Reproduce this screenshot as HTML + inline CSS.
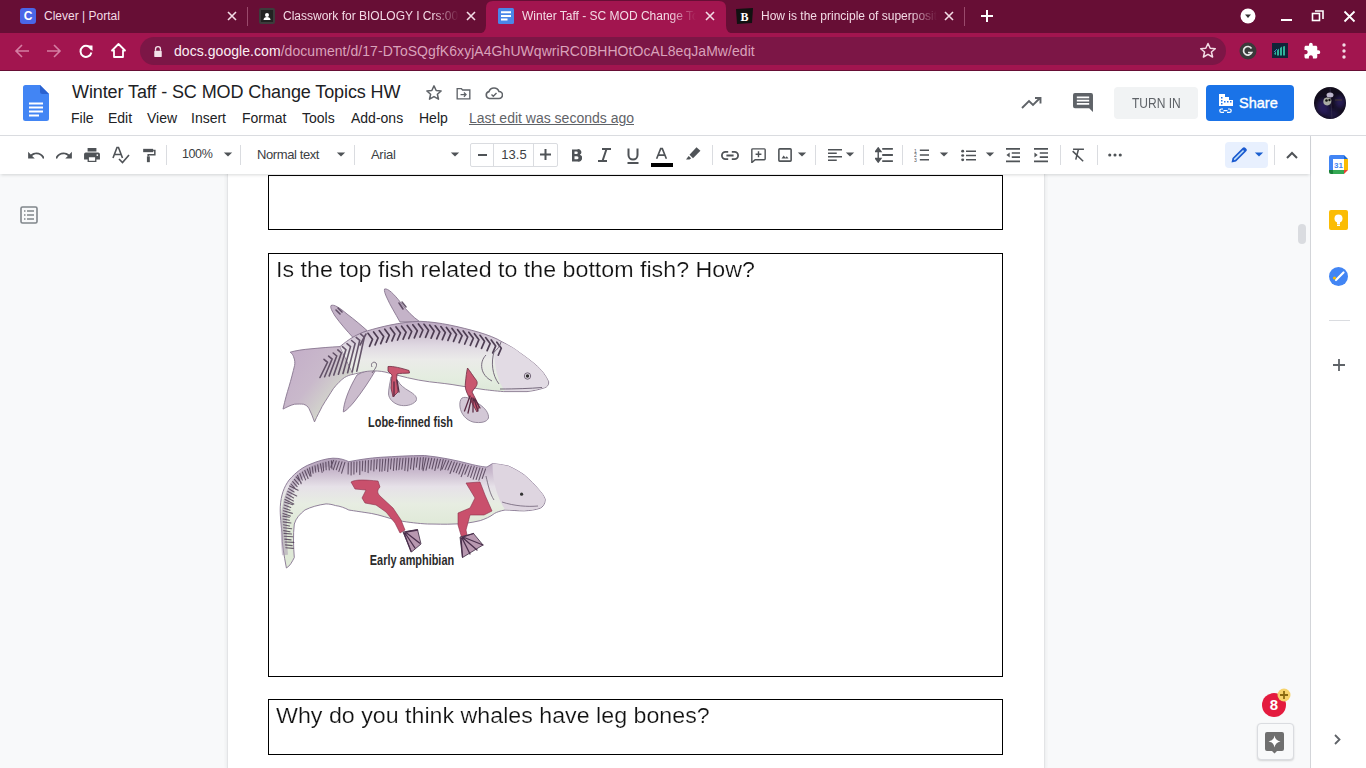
<!DOCTYPE html>
<html><head><meta charset="utf-8">
<style>
*{margin:0;padding:0;box-sizing:border-box}
html,body{width:1366px;height:768px;overflow:hidden;background:#f8f9fa;font-family:"Liberation Sans",sans-serif}
.a{position:absolute}
#tabbar{left:0;top:0;width:1366px;height:33px;background:#670e35}
#toolbar{left:0;top:33px;width:1366px;height:37px;background:#a2154f}
.tabt{font-size:12px;color:#f3dbe5;white-space:nowrap;top:9px;line-height:14px}
.sep{background:#9a4a6c}
#omni{left:140px;top:37px;width:1086px;height:28px;border-radius:14px;background:#7c1646}
#hdr{left:0;top:70px;width:1366px;height:65px;background:#fff;border-top:1px solid #670e35}
.menu{font-size:14px;color:#202124;top:110px;line-height:17px}
#dtb{left:0;top:135px;width:1310px;height:39px;background:#fff;border-top:1px solid #dadce0;box-shadow:0 2px 3px -1px rgba(60,64,67,.2)}
.tsep{width:1px;height:20px;top:145px;background:#dadce0}
.tt{font-size:13px;color:#3c4043;top:147px;line-height:16px}
#side{left:1310px;top:135px;width:56px;height:633px;background:#fff;border-left:1px solid #d3d5d9}
#page{left:227px;top:174px;width:818px;height:594px;background:#fff;border-left:1px solid #e3e4e6;border-right:1px solid #e3e4e6;box-shadow:0 0 3px 1px rgba(60,64,67,.07)}
.box{border:1.5px solid #000;left:268px;width:735px}
.q{font-size:21.5px;color:#111;-webkit-text-stroke:0.2px #fff;left:276px;line-height:24px;white-space:nowrap;transform-origin:0 0}
</style></head><body>
<!-- TAB BAR -->
<div id="tabbar" class="a"></div>
<!-- tab 1 -->
<div class="a" style="left:20px;top:8px;width:16px;height:16px;border-radius:3px;background:#4a66e8"></div>
<div class="a" style="left:20px;top:8px;width:16px;height:16px;color:#fff;font-weight:bold;font-size:12px;line-height:16px;text-align:center">C</div>
<div class="a tabt" style="left:44px">Clever | Portal</div>
<svg class="a" style="left:226px;top:10px" width="12" height="12" viewBox="0 0 12 12"><path d="M2 2L10 10M10 2L2 10" stroke="#f3dbe5" stroke-width="1.6"/></svg>
<div class="a sep" style="left:247px;top:7px;width:1px;height:19px"></div>
<!-- tab 2 -->
<div class="a" style="left:259px;top:8px;width:16px;height:16px;background:#3c3c3c;border-radius:2px"></div>
<svg class="a" style="left:259px;top:8px" width="16" height="16" viewBox="0 0 16 16"><rect x="2" y="2" width="12" height="12" fill="#222"/><circle cx="8" cy="7" r="2" fill="#fff"/><path d="M4.5 12c0-2 1.5-3 3.5-3s3.5 1 3.5 3z" fill="#fff"/></svg>
<div class="a tabt" style="left:283px;width:176px;overflow:hidden;-webkit-mask-image:linear-gradient(90deg,#000 85%,transparent)">Classwork for BIOLOGY I Crs:001</div>
<svg class="a" style="left:465px;top:10px" width="12" height="12" viewBox="0 0 12 12"><path d="M2 2L10 10M10 2L2 10" stroke="#f3dbe5" stroke-width="1.6"/></svg>
<!-- active tab -->
<svg class="a" style="left:0;top:0" width="1366" height="34" viewBox="0 0 1366 34"><path d="M478 33.5Q486 33.5 486 25.5V8Q486 1 493 1H719Q726 1 726 8V25.5Q726 33.5 734 33.5z" fill="#a2154f"/></svg>
<svg class="a" style="left:498px;top:8px" width="16" height="16" viewBox="0 0 16 16"><rect x="0" y="0" width="16" height="16" rx="1.5" fill="#4a86e8"/><path d="M3 4.3h10M3 7.9h10M3 11.5h6.5" stroke="#fff" stroke-width="2"/></svg>
<div class="a tabt" style="left:522px;width:174px;overflow:hidden;-webkit-mask-image:linear-gradient(90deg,#000 85%,transparent)">Winter Taff - SC MOD Change Topics HW</div>
<svg class="a" style="left:704px;top:10px" width="12" height="12" viewBox="0 0 12 12"><path d="M2 2L10 10M10 2L2 10" stroke="#f3dbe5" stroke-width="1.6"/></svg>
<!-- tab 4 -->
<svg class="a" style="left:736px;top:8px" width="17" height="16" viewBox="0 0 17 16"><path d="M0 1L17 0L16 15L1 16z" fill="#111"/><text x="8.5" y="12.5" font-family="Liberation Serif" font-weight="bold" font-size="12" fill="#fff" text-anchor="middle">B</text></svg>
<div class="a tabt" style="left:761px;width:176px;overflow:hidden;-webkit-mask-image:linear-gradient(90deg,#000 85%,transparent)">How is the principle of superposition</div>
<svg class="a" style="left:943px;top:10px" width="12" height="12" viewBox="0 0 12 12"><path d="M2 2L10 10M10 2L2 10" stroke="#f3dbe5" stroke-width="1.6"/></svg>
<div class="a sep" style="left:964px;top:7px;width:1px;height:19px"></div>
<svg class="a" style="left:980px;top:9px" width="14" height="14" viewBox="0 0 14 14"><path d="M7 1V13M1 7H13" stroke="#fff" stroke-width="2"/></svg>
<!-- window controls -->
<svg class="a" style="left:1240px;top:8px" width="16" height="16" viewBox="0 0 16 16"><circle cx="8" cy="8" r="7.5" fill="#fff"/><path d="M5 6.5h6L8 10z" fill="#333"/></svg>
<div class="a" style="left:1281px;top:19px;width:11px;height:2px;background:#fff"></div>
<svg class="a" style="left:1311px;top:10px" width="13" height="12" viewBox="0 0 13 12"><path d="M4 1h8v8" fill="none" stroke="#fff" stroke-width="1.6"/><rect x="1.5" y="3.5" width="7" height="7" fill="none" stroke="#fff" stroke-width="1.6"/></svg>
<svg class="a" style="left:1343px;top:10px" width="13" height="13" viewBox="0 0 13 13"><path d="M1.5 1.5L11.5 11.5M11.5 1.5L1.5 11.5" stroke="#fff" stroke-width="1.8"/></svg>

<!-- TOOLBAR -->
<div id="toolbar" class="a"></div>
<svg class="a" style="left:14px;top:43px" width="16" height="16" viewBox="0 0 16 16"><path d="M15 8H2M8 2L2 8L8 14" fill="none" stroke="#d57ea3" stroke-width="1.6"/></svg>
<svg class="a" style="left:46px;top:43px" width="16" height="16" viewBox="0 0 16 16"><path d="M1 8H14M8 2L14 8L8 14" fill="none" stroke="#d57ea3" stroke-width="1.6"/></svg>
<svg class="a" style="left:78px;top:43px" width="16" height="16" viewBox="0 0 16 16"><path d="M13.2 6.5A5.5 5.5 0 1 0 13.4 9.5" fill="none" stroke="#fff" stroke-width="2"/><path d="M9 2.5h5.5V8z" fill="#fff"/></svg>
<svg class="a" style="left:110px;top:42px" width="17" height="17" viewBox="0 0 17 17"><path d="M8.5 2L2 8.5H4V15H13V8.5H15z" fill="none" stroke="#fff" stroke-width="1.8" stroke-linejoin="round"/></svg>
<div id="omni" class="a"></div>
<svg class="a" style="left:153px;top:44.5px" width="10" height="12.5" viewBox="0 0 12 15"><path d="M3 7V5a3 3 0 0 1 6 0v2" fill="none" stroke="#f3e3ea" stroke-width="1.6"/><rect x="1.5" y="7" width="9" height="7.5" rx="1" fill="#f3e3ea"/></svg>
<div class="a" style="left:174px;top:43px;font-size:14px;letter-spacing:0.055px;line-height:16px;white-space:nowrap;color:#fbeff4">docs.google.com<span style="color:#d9a2ba">/document/d/17-DToSQgfK6xyjA4GhUWqwriRC0BHHOtOcAL8eqJaMw/edit</span></div>
<svg class="a" style="left:1199px;top:42px" width="18" height="17" viewBox="0 0 18 17"><path d="M9 1.5L11.2 6.3L16.3 6.7L12.4 10L13.6 15L9 12.3L4.4 15L5.6 10L1.7 6.7L6.8 6.3z" fill="none" stroke="#f3dbe5" stroke-width="1.5" stroke-linejoin="round"/></svg>
<svg class="a" style="left:1239px;top:42px" width="18" height="18" viewBox="0 0 18 18"><circle cx="9" cy="9" r="8.5" fill="#3a3a3a"/><path d="M12.5 6.5A4.3 4.3 0 1 0 12.8 10.5H9" fill="none" stroke="#e8e8e8" stroke-width="1.7"/></svg>
<svg class="a" style="left:1272px;top:43px" width="16" height="15" viewBox="0 0 16 15"><rect width="16" height="15" fill="#0f2438"/><path d="M2 11L4 8L4 12zM5 7.5L7 5.5V12.5H5zM8 5L10 3.5V12.5H8zM11 3.5L13 3V12.5H11z" fill="#2fb39a"/><path d="M2 9L5 6" stroke="#3a7fc4" stroke-width="1"/></svg>
<svg class="a" style="left:1303px;top:42px" width="18" height="18" viewBox="0 0 24 24"><path d="M20.5 11H19V7c0-1.1-.9-2-2-2h-4V3.5a2.5 2.5 0 0 0-5 0V5H4c-1.1 0-2 .9-2 2v3.8h1.5c1.5 0 2.7 1.2 2.7 2.7S5 16.2 3.5 16.2H2V20c0 1.1.9 2 2 2h3.8v-1.5c0-1.5 1.2-2.7 2.7-2.7s2.7 1.2 2.7 2.7V22H17c1.1 0 2-.9 2-2v-4h1.5a2.5 2.5 0 0 0 0-5z" fill="#fff"/></svg>
<svg class="a" style="left:1340px;top:42px" width="8" height="18" viewBox="0 0 8 18"><circle cx="4" cy="3" r="1.7" fill="#f3dbe5"/><circle cx="4" cy="9" r="1.7" fill="#f3dbe5"/><circle cx="4" cy="15" r="1.7" fill="#f3dbe5"/></svg>

<!-- DOCS HEADER -->
<div id="hdr" class="a"></div>
<svg class="a" style="left:23px;top:85px" width="26" height="36" viewBox="0 0 26 36"><path d="M0 2.5A2.5 2.5 0 0 1 2.5 0H17L26 9V33.5A2.5 2.5 0 0 1 23.5 36H2.5A2.5 2.5 0 0 1 0 33.5z" fill="#4285f4"/><path d="M17 0L26 9H19.5A2.5 2.5 0 0 1 17 6.5z" fill="#2a62d0"/><path d="M6 18.5H20M6 22.5H20M6 26.5H20M6 30.5H16" stroke="#fff" stroke-width="1.9"/></svg>
<div class="a" style="left:72px;top:81px;font-size:18px;letter-spacing:-0.1px;line-height:22px;color:#202124;white-space:nowrap">Winter Taff - SC MOD Change Topics HW</div>
<svg class="a" style="left:425px;top:84px" width="18" height="18" viewBox="0 0 24 24"><path d="M12 2.5l2.9 6.2 6.6.6-5 4.4 1.5 6.6L12 16.8l-6 3.5 1.5-6.6-5-4.4 6.6-.6z" fill="none" stroke="#5f6368" stroke-width="2" stroke-linejoin="round"/></svg>
<svg class="a" style="left:456px;top:86.5px" width="15" height="13.5" viewBox="0 0 17 16"><path d="M1 2h5l1.5 1.5H16V14H1z" fill="none" stroke="#5f6368" stroke-width="1.6"/><path d="M5 9H11M9 6.5L11.5 9L9 11.5" fill="none" stroke="#5f6368" stroke-width="1.5"/></svg>
<svg class="a" style="left:485px;top:86px" width="18" height="14" viewBox="0 0 18 14"><path d="M4.5 12.5A3.5 3.5 0 0 1 4 5.6A5.3 5.3 0 0 1 14 5.5A3.5 3.5 0 0 1 14 12.5z" fill="none" stroke="#5f6368" stroke-width="1.6"/><path d="M6.5 8.5L8.3 10.2L11.5 7" fill="none" stroke="#5f6368" stroke-width="1.4"/></svg>
<div class="a menu" style="left:71px">File</div>
<div class="a menu" style="left:108px">Edit</div>
<div class="a menu" style="left:147px">View</div>
<div class="a menu" style="left:191px">Insert</div>
<div class="a menu" style="left:242px">Format</div>
<div class="a menu" style="left:302px">Tools</div>
<div class="a menu" style="left:351px">Add-ons</div>
<div class="a menu" style="left:419px">Help</div>
<div class="a menu" style="left:469px;color:#5f6368;text-decoration:underline">Last edit was seconds ago</div>
<svg class="a" style="left:1021px;top:94px" width="22" height="16" viewBox="0 0 22 16"><path d="M1 14L8 7L12 11L19 4M14 4H19.5V9.5" fill="none" stroke="#5f6368" stroke-width="1.9"/></svg>
<svg class="a" style="left:1073px;top:93px" width="20" height="19" viewBox="0 0 21 20"><path d="M2 0H19A2 2 0 0 1 21 2V20L17 16H2A2 2 0 0 1 0 14V2A2 2 0 0 1 2 0z" fill="#5f6368"/><path d="M4 4.5H17M4 8H17M4 11.5H17" stroke="#fff" stroke-width="1.8"/></svg>
<div class="a" style="left:1114px;top:87px;width:84px;height:32px;border-radius:4px;background:#f1f3f4;color:#5f6368;font-size:14px;line-height:32px;text-align:center"><span style="display:inline-block;transform:scaleX(.86)">TURN IN</span></div>
<div class="a" style="left:1206px;top:85px;width:88px;height:36px;border-radius:4px;background:#1a73e8"></div>
<svg class="a" style="left:1218px;top:93px" width="16" height="20" viewBox="0 0 16 20"><path d="M1 1h6v3h4v3h4v6H1z" fill="#fff"/><g fill="#1a73e8"><rect x="3" y="4" width="1.5" height="1.5"/><rect x="3" y="7" width="1.5" height="1.5"/><rect x="3" y="10" width="1.5" height="1.5"/><rect x="9" y="8" width="1.5" height="1.5"/><rect x="12" y="8" width="1.5" height="1.5"/><rect x="6" y="8" width="1.5" height="1.5"/></g><path d="M5 16h-1.5a1.7 1.7 0 0 0 0 3.4H6M10 16h1.5a1.7 1.7 0 0 1 0 3.4H9M5.5 17.7h4" fill="none" stroke="#fff" stroke-width="1.2"/></svg>
<div class="a" style="left:1239px;top:94px;font-size:14.5px;line-height:18px;color:#fff;-webkit-text-stroke:0.35px #fff">Share</div>
<svg class="a" style="left:1314px;top:87px" width="32" height="32" viewBox="0 0 32 32"><defs><clipPath id="avc"><circle cx="16" cy="16" r="16"/></clipPath></defs><g clip-path="url(#avc)"><rect width="32" height="32" fill="#120d1c"/><defs><filter id="avb"><feGaussianBlur stdDeviation="2"/></filter></defs><g filter="url(#avb)"><ellipse cx="9" cy="20" rx="6" ry="8" fill="#3a2a8a" opacity=".55"/><ellipse cx="26" cy="15" rx="5" ry="6" fill="#3b2d90" opacity=".5"/><ellipse cx="18" cy="27" rx="7" ry="5" fill="#2a1f66" opacity=".5"/></g><path d="M16 0L18 32" stroke="#3a3550" stroke-width="1" opacity=".6"/><ellipse cx="16" cy="8" rx="3.5" ry="2.5" fill="#cfc8de" opacity=".9"/><path d="M10 12C11 10 15 10 17 12C18 14 17 17 15 18C13 19 10 18 9.5 16C9 14 9.5 13 10 12z" fill="#b9bcae" opacity=".9"/><circle cx="12.5" cy="13.5" r="1.3" fill="#111"/><circle cx="15.5" cy="13" r="1.2" fill="#111"/><path d="M21 13H28" stroke="#5a4a2a" stroke-width="1" opacity=".7"/></g></svg>


<div id="side" class="a"></div>
<!-- CONTENT -->
<div id="page" class="a"></div>
<svg class="a" style="left:20px;top:206px" width="18" height="18" viewBox="0 0 18 18"><rect x="1" y="1" width="16" height="16" rx="1.5" fill="none" stroke="#80868b" stroke-width="1.6"/><path d="M4 5H5.5M7 5H14M4 9H5.5M7 9H14M4 13H5.5M7 13H14" stroke="#80868b" stroke-width="1.4"/></svg>
<div class="a box" style="top:175px;height:55px"></div>
<div class="a box" style="top:253px;height:424px"></div>
<div class="a box" style="top:699px;height:56px"></div>
<div class="a q" style="top:258px;transform:scaleX(1.08)">Is the top fish related to the bottom fish? How?</div>
<div class="a q" style="top:704px;transform:scaleX(1.08)">Why do you think whales have leg bones?</div>

<!-- FISH ART -->
<svg class="a" style="left:0;top:0" width="1366" height="768" viewBox="0 0 1366 768">
<defs>
<linearGradient id="fb" x1="0" y1="320" x2="0" y2="392" gradientUnits="userSpaceOnUse"><stop offset="0" stop-color="#b9a5bf"/><stop offset=".17" stop-color="#cbbdcf"/><stop offset=".36" stop-color="#e0d9e2"/><stop offset=".55" stop-color="#ebebe9"/><stop offset=".8" stop-color="#e4ede0"/><stop offset="1" stop-color="#dde8d8"/></linearGradient>
<linearGradient id="ab" x1="0" y1="455" x2="0" y2="525" gradientUnits="userSpaceOnUse"><stop offset="0" stop-color="#b09db7"/><stop offset=".25" stop-color="#cbbccf"/><stop offset=".45" stop-color="#e6e1e8"/><stop offset=".7" stop-color="#e7ede2"/><stop offset="1" stop-color="#dfe9d7"/></linearGradient>
<linearGradient id="tl" x1="285" y1="350" x2="350" y2="400" gradientUnits="userSpaceOnUse"><stop offset="0" stop-color="#c3adc8"/><stop offset=".5" stop-color="#c9b9cb"/><stop offset=".8" stop-color="#d2d3cc"/><stop offset="1" stop-color="#d5dccf"/></linearGradient>
</defs>
<g stroke="#887690" stroke-width=".9" stroke-linejoin="round">
<!-- rear dorsal -->
<path d="M331 305.5C334 304 340 308 347 314C355 320 362 326 367 330.5L353 337.5C347 331 340 323 335 316C332 311 330 307.5 331 305.5z" fill="#c4b3c8"/>
<!-- front dorsal -->
<path d="M384.5 289C388 288 394 294 401 303C407 311 413 317 419.5 321.5L400 322C395 313 390 305 387 298C385 294 384 290.5 384.5 289z" fill="#c4b3c8"/>
<!-- anal -->
<path d="M357 375C362 372 368 370 376 369.5C370 380 362 392 354 402C349 408 345 411.5 343.3 411.9C343.5 404 348 390 357 375z" fill="#cbbccd"/>
<!-- tail -->
<path d="M340 346.6C330 347 320 348 311 348.8C303 349.5 296 350.5 290.2 352.2C292 353.5 293 355 293.5 356.6C295 360 295 363 294.6 365.4C293 372 291 380 289 386.5C287 393 285 400 283 409.1C287 407 291 405 294.6 404.2C298 404 301 404 303.4 404.2C306 405 308 406.5 309 408.6C311 413 313 417 314.5 421.9C317 416 320 411 322.2 406.4C326 400 330 394 333.3 388.7C337 384 341 380 344.4 377.6C347 376 350 374.8 353.2 374.3z" fill="url(#tl)"/>
<!-- body -->
<path d="M340 346.6C349 339 357 334 367 331C380 327 400 322 420 321.3C440 322 460 327 478 332C488 335 496 338 502 341.8C510 346 515 349 519.4 352.5C526 357 531 361 535 364.2C542 370 546 376 548.7 381.8C549 385 547 387 544.8 387.7C538 390 532 391 527 391.6L503.7 391.6C495 391 488 390 484 389.6L459 385.7C450 384 440 383 429.5 381.8C415 380 400 376 385 372C375 370 366 371 359 373C356 373.5 354.5 374 353.2 374.3C348 362 343 352 340 346.6z" fill="url(#fb)" stroke="none"/>
<path d="M340 346.6C349 339 357 334 367 331C380 327 400 322 420 321.3C440 322 460 327 478 332C488 335 496 338 502 341.8C510 346 515 349 519.4 352.5C526 357 531 361 535 364.2C542 370 546 376 548.7 381.8C549 385 547 387 544.8 387.7C538 390 532 391 527 391.6L503.7 391.6C495 391 488 390 484 389.6L459 385.7C450 384 440 383 429.5 381.8C415 380 400 376 385 372C375 370 366 371 359 373C356 373.5 354.5 374 353.2 374.3" fill="none"/>
</g>
<!-- head tint -->
<path d="M501 342C510 346 515 349 519.4 352.5C526 357 531 361 535 364.2C542 370 546 376 548 381.5C548 385 546.5 387 544.5 387.5C538 389.5 532 390.5 527 391L505 391C497 381 493 362 495 344z" fill="#e2dbe4"/>
<g stroke="#3f2f45" stroke-width="1.7" stroke-linecap="round" stroke-linejoin="round" fill="none" opacity=".9">
<path d="M368.0 333.3L372.5 339.3L369.5 346.3 M373.6 331.9L378.1 337.9L375.1 344.9 M379.2 330.6L383.7 336.6L380.7 343.6 M384.8 329.2L389.3 335.2L386.3 342.2 M390.4 327.9L394.9 333.9L391.9 340.9 M396.0 327.0L400.5 333.0L397.5 340.0 M401.6 326.2L406.1 332.2L403.1 339.2 M407.2 325.5L411.7 331.5L408.7 338.5 M412.8 324.8L417.3 330.8L414.3 337.8 M418.4 324.0L422.9 330.0L419.9 337.0 M424.0 324.3L428.5 330.3L425.5 337.3 M429.6 325.1L434.1 331.1L431.1 338.1 M435.2 325.8L439.7 331.8L436.7 338.8 M440.8 326.6L445.3 332.6L442.3 339.6 M446.4 327.4L450.9 333.4L447.9 340.4 M452.0 328.4L456.5 334.4L453.5 341.4 M457.6 329.7L462.1 335.7L459.1 342.7 M463.2 331.0L467.7 337.0L464.7 344.0 M468.8 332.3L473.3 338.3L470.3 345.3 M474.4 333.7L478.9 339.7L475.9 346.7 M480.0 335.3L484.5 341.3L481.5 348.3 M485.6 337.6L490.1 343.6L487.1 350.6 M491.2 339.9L495.7 345.9L492.7 352.9 M496.8 342.2L501.3 348.2L498.3 355.2"/>
</g>
<g stroke="#4f3d55" stroke-width="1.6" stroke-linecap="round" fill="none" opacity=".85">
<path d="M324.0 359.3L327.5 362.3L320.0 377.5 M328.6 356.1L332.1 359.1L324.6 376.7 M333.2 353.0L336.7 356.0L329.2 375.9 M337.8 349.9L341.3 352.9L333.8 375.1 M342.4 346.7L345.9 349.7L338.4 374.3 M347.0 343.6L350.5 346.6L343.0 373.5 M351.6 340.5L355.1 343.5L347.6 372.7 M356.2 337.4L359.7 340.4L352.2 371.9 M360.8 334.2L364.3 337.2L356.8 371.1"/>
<path d="M360 345L366 334"/>
<path d="M336 310L340 314M338 308L342 312M399 303L403 309M402 302L406 307"/>
</g>
<g fill="none" stroke="#6a5e70" stroke-width=".9">
<path d="M486 355C479 362 480 375 492 381"/>
<path d="M501 342C500 346 497 350 494 352C491 362 492 375 499 384"/>
<path d="M500 389C515 389 530 388.5 542 387.5"/>
<circle cx="527.5" cy="376" r="3.2"/>
<path d="M372 367C370 363 374 361 376 363C378 366 374 370 372 373"/>
</g>
<circle cx="527.5" cy="376" r="1.7" fill="#2e2e2e"/>
<!-- lobe fins -->
<g stroke="#8e8296" stroke-width=".9">
<path d="M391 377C390 383 388.5 389 388.5 394C389 399 393 403 399 405C405 406.5 412 405.5 416 401C418 397 414 394 409 391C404 388 400 385 398 381z" fill="#d3c8d6"/>
<path d="M462 398C466 396 472 399 479 404C485 408 489 413 488.5 418C487 422 481 423.5 473 422C466 420 461 414 460 407C459.5 403 460 400 462 398z" fill="#d3c8d6"/>
</g>
<g fill="#c9566f" stroke="#6e2b41" stroke-width=".8" stroke-linejoin="round">
<path d="M388 366.5C393 366 401 368 409 370.5L409.5 373C405 373.5 400 373 397 374L396.5 380L398 392L393 397L391 388L392 375L388 371z"/>
<path d="M467.5 368C470 371 473 376 476.5 380.5C478 383 477 386 474 389L472 392C474 396 477 401 479 407L477 412C474 407 471 401 468 395C466 391 464.5 387 465.5 382C466 377 466.5 372 467.5 368z"/>
</g>
<g stroke="#5a2c45" stroke-width="1.3" fill="none" stroke-linecap="round">
<path d="M470 396L464.5 411M471.5 398L468 413M473 398L473 412M474 399L478 411M475 399L480 408"/>
<path d="M394 382L394 396M397 380L399 392"/>
</g>
<text x="410.5" y="426.8" font-family="Liberation Sans" font-size="14" font-weight="bold" fill="#2b2b2b" text-anchor="middle" transform="translate(410.5 0) scale(.78 1) translate(-410.5 0)">Lobe-finned fish</text>

<!-- early amphibian -->
<g stroke="#857390" stroke-width=".9" stroke-linejoin="round">
<path d="M286.4 568C284 555 282 545 282 532.9C280.5 520 280 512 280.3 506.5C281 495 284 487 289 480.1C296 472 303 467 310 464.3C318 461 326 458.5 333 458.2C340 458 345 460 348.8 461.7C360 459.5 370 458 380.4 457.3C395 456.5 410 455.5 424.4 455.5C440 457 455 460 470 464C478 466 484 467 487 467L492.6 463.5C498 464 503 465 508.4 466C515 469 520 472 524.2 474.9C530 480 535 485 538.3 489C542 493 544 496 545.3 499.5C545 504 543 507 540 508.3C535 510 530 510.5 524.2 510.9C518 511 510 510 505 510C500 511 497 512 494.4 513.5C490 517 485 519 480.3 520.6C470 523 462 524 454 524C445 524.5 436 524 427.6 524C418 523.5 410 522.5 398 520.6C388 518 380 515 371.7 513.5C362 512 355 511 348.8 510C345 508 340 506 335.6 505.6C332 504.5 330 504 326 503.9C318 505 311 507 304.9 510C300 514 296 518 294.3 524C293 535 293.5 547 294.3 557.5C292 562 290 566 286.4 568z" fill="url(#ab)"/>
</g>
<path d="M492.6 463.5C498 464 503 465 508.4 466C515 469 520 472 524.2 474.9C530 480 535 485 538.3 489C542 493 544 496 545 499.5C544.5 503.5 542.5 506.5 540 507.8C535 509.5 530 510 524.2 510.4C518 510.5 510 509.5 505 509.5C498 500 492 480 492.6 463.5z" fill="#ded5e0"/>
<path d="M285 555C283.5 540 283.5 525 284.5 512C286 498 291 486 299 477C309 469 321 464 336 462" fill="none" stroke="#a596ad" stroke-width="6" opacity=".5"/>
<g stroke="#4a384f" stroke-width="1.1" fill="none" stroke-linecap="round" opacity=".8">
<path d="M285.8 547.8L293.2 548.4M285.4 544.9L292.2 545.6M285.1 542.0L293.8 542.4M284.7 539.1L291.1 539.9M284.3 536.3L292.6 536.7M284.0 533.4L291.6 534.0M283.7 530.6L290.0 531.8M283.6 527.7L291.7 528.8M283.4 524.8L289.6 526.0M283.2 521.9L291.0 523.0M283.0 519.0L289.4 520.2M282.9 516.1L289.3 517.3M283.0 513.6L290.4 516.1M283.4 510.7L292.4 513.4M283.8 507.9L290.0 510.2M284.2 505.0L290.8 507.4M284.5 502.1L292.8 504.7M285.0 499.6L293.8 504.1M285.9 496.9L293.4 500.9M286.9 494.1L293.6 497.9M287.8 491.4L296.7 495.9M288.7 488.6L294.1 492.0M289.6 485.9L298.1 490.3M291.0 484.0L295.9 489.4M292.7 481.6L297.1 486.7M294.4 479.3L298.7 484.3M296.1 476.9L301.1 482.4M297.5 475.2L301.2 483.8M299.9 473.6L302.3 480.1M302.4 472.1L305.6 479.9M304.8 470.5L308.1 478.5M307.3 469.0L310.0 476.1M309.6 467.9L311.1 476.1M312.3 466.9L313.1 473.3M315.0 465.9L315.8 472.2M317.7 464.8L318.7 471.7M320.4 463.8L322.1 472.5M323.0 463.1L323.6 470.9M325.8 462.3L326.2 469.7M328.6 461.5L329.3 470.0M331.4 460.8L332.0 468.7M333.5 460.4L330.8 467.3M336.3 460.9L333.3 469.7M339.2 461.4L336.3 469.8M342.0 461.8L338.9 471.4M344.9 462.3L341.6 473.2M348.3 462.8L348.1 474.0M351.2 462.4L351.1 475.0M354.0 462.1L353.9 474.1M356.9 461.8L356.6 472.0M359.8 461.4L359.8 474.4M362.7 461.1L362.3 470.7M365.5 460.8L365.1 471.5M368.4 460.5L368.1 472.6M371.3 460.2L370.8 469.9M374.2 459.9L373.8 470.9M377.1 459.6L376.5 468.9M380.0 459.3L379.6 471.1M382.8 459.2L381.9 471.3M385.7 459.0L384.7 470.4M388.6 458.9L387.7 471.4M391.4 458.7L390.5 469.0M394.3 458.6L393.4 470.4M397.2 458.4L396.3 469.9M400.1 458.3L398.9 469.7M403.0 458.2L401.8 469.1M405.9 458.1L404.8 470.5M408.8 458.0L407.7 470.9M411.7 458.0L410.5 468.9M414.6 457.9L413.4 469.6M417.5 457.8L416.3 467.1M420.4 457.7L419.2 469.6M423.3 457.6L422.1 469.2M425.9 457.8L423.1 470.6M428.8 458.1L426.0 470.2M431.7 458.4L429.2 468.3M434.6 458.7L432.0 469.0M437.5 459.0L434.8 470.5M440.4 459.3L437.9 468.2M443.2 459.6L440.6 470.3M445.9 460.1L442.1 469.1M448.7 460.7L445.0 469.6M451.5 461.4L447.9 470.0M454.3 462.1L450.0 473.5M457.1 462.8L453.5 471.7M460.0 463.4L456.2 472.8M462.8 464.1L458.9 474.0M465.6 464.8L461.2 476.6M468.4 465.5L464.8 474.2M471.3 466.1L467.8 476.4M474.2 466.6L470.6 477.4M477.0 467.2L473.2 479.2M479.9 467.8L476.1 479.5M482.7 468.3L478.9 480.2M485.6 468.9L482.2 478.5"/>
</g>
<path d="M486 476C488 485 490 494 494 500" fill="none" stroke="#6a5e70" stroke-width=".8"/>
<circle cx="521.6" cy="494.2" r="1.6" fill="#333"/>
<path d="M502 502C514 506 528 507 538 506" fill="none" stroke="#6f6176" stroke-width=".8"/>
<g fill="#c9506c" stroke="#8a2f4a" stroke-width=".6" stroke-linejoin="round">
<path d="M351 482C356 479 366 480 378 481L380 487C377 490 377 493 380 496L393 508L401 520L405 530L400 533L395 523L386 512L376 505L365 503L362 498L366 490L355 489z"/>
<path d="M466 483L480 482L485 495L492 511L484 515L470 515L466 530L468 540L463 542L458 525L458 513L470 508L475 498z"/>
</g>
<path d="M403 532L417.5 529.5L421 544L411.5 552z" fill="#b898b0" stroke="#3a2840" stroke-width=".8" stroke-linejoin="round"/>
<g stroke="#4a2f4c" stroke-width="1.3" fill="none" stroke-linecap="round">
<path d="M404 533L411 551.5M405 533L415 548M406 532.5L419.5 543M406 532L417.5 530"/>
</g>
<path d="M460 537L473.5 533.5L483 545L462.5 557.5z" fill="#b898b0" stroke="#3a2840" stroke-width=".8" stroke-linejoin="round"/>
<g stroke="#4a2f4c" stroke-width="1.3" fill="none" stroke-linecap="round">
<path d="M461 538L462.5 557M462 538L470 554M462.5 537.5L477 550M463 537L483 545M463 537L473.5 533.5"/>
</g>
<text x="412" y="565" font-family="Liberation Sans" font-size="14" font-weight="bold" fill="#2b2b2b" text-anchor="middle" transform="translate(412 0) scale(.78 1) translate(-412 0)">Early amphibian</text>
</svg>

<!-- scrollbar -->
<div class="a" style="left:1298px;top:224px;width:8px;height:20px;border-radius:4px;background:#dadce0"></div>
<!-- side panel icons -->
<svg class="a" style="left:1329px;top:155px" width="19" height="19" viewBox="0 0 19 19"><path d="M0 2A2 2 0 0 1 2 0H15L19 4V17A2 2 0 0 1 17 19H4L0 15z" fill="#fff"/><path d="M2 0H15V4H4V15H0V2A2 2 0 0 1 2 0z" fill="#4285f4"/><path d="M15 0L19 4H15z" fill="#1967d2"/><path d="M15 4H19V15H15z" fill="#fbbc04"/><path d="M4 15H15V19H4z" fill="#34a853"/><path d="M0 15H4V19H2A2 2 0 0 1 0 17z" fill="#188038"/><path d="M15 15H19L15 19z" fill="#ea4335"/><text x="9.5" y="13" font-size="8" font-weight="bold" fill="#4285f4" text-anchor="middle" font-family="Liberation Sans">31</text></svg>
<svg class="a" style="left:1329px;top:210px" width="19" height="20" viewBox="0 0 19 20"><rect width="19" height="20" rx="2" fill="#fbbc04"/><circle cx="9.5" cy="8.5" r="4" fill="#fff"/><rect x="8" y="12" width="3" height="2.5" fill="#fff"/><rect x="8" y="15" width="3" height="1" fill="#fff"/></svg>
<svg class="a" style="left:1329px;top:267px" width="19" height="19" viewBox="0 0 19 19"><circle cx="9.5" cy="9.5" r="9.5" fill="#4285f4"/><path d="M7 13L14.5 5.5" stroke="#fff" stroke-width="2.2" stroke-linecap="round"/><circle cx="5.5" cy="11" r="1.6" fill="#fbbc04"/></svg>
<div class="a" style="left:1329px;top:320px;width:21px;height:1px;background:#dadce0"></div>
<svg class="a" style="left:1333px;top:359px" width="12" height="12" viewBox="0 0 12 12"><path d="M6 0V12M0 6H12" stroke="#5f6368" stroke-width="1.8"/></svg>
<svg class="a" style="left:1334px;top:734px" width="7" height="11" viewBox="0 0 7 11"><path d="M1 1L5.5 5.5L1 10" fill="none" stroke="#5f6368" stroke-width="1.8"/></svg>
<!-- badge + explore -->
<div class="a" style="left:1257px;top:723px;width:37px;height:37px;border-radius:4px;background:#f8f9fa;border:1px solid #dadce0;box-shadow:0 1px 2px rgba(0,0,0,.15)"></div>
<svg class="a" style="left:1265px;top:732px" width="19" height="22" viewBox="0 0 19 22"><path d="M2 0H17A2 2 0 0 1 19 2V17A2 2 0 0 1 17 19H12L9.5 21.5L7 19H2A2 2 0 0 1 0 17V2A2 2 0 0 1 2 0z" fill="#6f6f6f"/><path d="M9.5 3.5Q10.3 8.7 15.5 9.5Q10.3 10.3 9.5 15.5Q8.7 10.3 3.5 9.5Q8.7 8.7 9.5 3.5z" fill="#fff"/></svg>
<div class="a" style="left:1262px;top:693px;width:24px;height:24px;border-radius:12px;background:#e41b3e;color:#fff;font-weight:bold;font-size:15px;line-height:24px;text-align:center">8</div>
<svg class="a" style="left:1277px;top:688px" width="14" height="14" viewBox="0 0 14 14"><circle cx="7" cy="7" r="6.5" fill="#f6d36b"/><path d="M7 3V11M3 7H11" stroke="#8a6a10" stroke-width="1.8"/></svg>

<!-- DOCS TOOLBAR -->
<div id="dtb" class="a"></div>

<!-- toolbar icons -->
<svg class="a" style="left:28px;top:148px" width="16" height="14" viewBox="0 0 18 16"><path d="M9.5 5C7 5 4.8 5.9 3 7.4L0 4.4V12H7.6L4.6 9C6 7.8 7.7 7.1 9.6 7.1c3.4 0 6.3 2.2 7.3 5.3l2-.7C17.6 7.9 13.9 5 9.5 5z" fill="#4f5357"/></svg>
<svg class="a" style="left:56px;top:148px" width="16" height="14" viewBox="0 0 18 16"><path d="M8.5 5C11 5 13.2 5.9 15 7.4L18 4.4V12H10.4L13.4 9C12 7.8 10.3 7.1 8.4 7.1c-3.4 0-6.3 2.2-7.3 5.3l-2-.7C.4 7.9 4.1 5 8.5 5z" fill="#4f5357"/></svg>
<svg class="a" style="left:84px;top:148px" width="16" height="15" viewBox="0 0 18 17"><path d="M4 0H14V4H4z" fill="#4f5357"/><path d="M2 5H16A2 2 0 0 1 18 7V13H14V16H4V13H0V7A2 2 0 0 1 2 5z" fill="#4f5357"/><rect x="5.5" y="10.5" width="7" height="4" fill="#fff"/><circle cx="15" cy="8" r="1" fill="#fff"/></svg>
<svg class="a" style="left:112px;top:146px" width="18" height="18" viewBox="0 0 18 18"><path d="M1 12L5 1.5H6.5L10.5 12M2.8 8.5H8.7" fill="none" stroke="#4f5357" stroke-width="1.6"/><path d="M7 13L10.5 16.5L17 9" fill="none" stroke="#4f5357" stroke-width="1.6"/></svg>
<svg class="a" style="left:142px;top:148px" width="14" height="15" viewBox="0 0 16 18"><path d="M1 1H13V5H1z" fill="#4f5357"/><path d="M13 3H15V8H7V10" fill="none" stroke="#4f5357" stroke-width="1.8"/><rect x="5.5" y="10" width="3.5" height="7" fill="#4f5357"/></svg>
<div class="a tsep" style="left:166px"></div>
<div class="a tt" style="left:182px;top:146px;font-size:12.5px;letter-spacing:-0.4px">100%</div>
<svg class="a" style="left:223px;top:152px" width="10" height="5" viewBox="-1 -0.5 12 6"><path d="M0 0H10L5 5z" fill="#4f5357"/></svg>
<div class="a tsep" style="left:240px"></div>
<div class="a tt" style="left:257px;letter-spacing:-0.4px">Normal text</div>
<svg class="a" style="left:336px;top:152px" width="10" height="5" viewBox="-1 -0.5 12 6"><path d="M0 0H10L5 5z" fill="#4f5357"/></svg>
<div class="a tsep" style="left:354px"></div>
<div class="a tt" style="left:371px;letter-spacing:-0.3px">Arial</div>
<svg class="a" style="left:450px;top:152px" width="10" height="5" viewBox="-1 -0.5 12 6"><path d="M0 0H10L5 5z" fill="#4f5357"/></svg>
<div class="a" style="left:470px;top:143px;width:88px;height:24px;border:1px solid #dadce0;border-radius:2px"></div>
<div class="a" style="left:493px;top:143px;width:1px;height:24px;background:#dadce0"></div>
<div class="a" style="left:533px;top:143px;width:1px;height:24px;background:#dadce0"></div>
<div class="a" style="left:478px;top:154px;width:9px;height:2px;background:#4f5357"></div>
<div class="a tt" style="left:494px;width:40px;text-align:center">13.5</div>
<svg class="a" style="left:540px;top:149px" width="11" height="11" viewBox="0 0 11 11"><path d="M5.5 0V11M0 5.5H11" stroke="#4f5357" stroke-width="2"/></svg>
<svg class="a" style="left:571px;top:148.5px" width="11" height="13" viewBox="0 0 11 13"><path d="M1 0.5H6A3 3 0 0 1 8.8 5.8A3.4 3.4 0 0 1 6.5 12.5H1z" fill="#4f5357"/><path d="M3.5 2.6H5.6A1.2 1.2 0 0 1 5.6 5H3.5zM3.5 7.2H6A1.4 1.4 0 0 1 6 10.2H3.5z" fill="#fff"/></svg>
<svg class="a" style="left:597px;top:148px" width="15" height="14" viewBox="0 0 15 14"><path d="M5 1H14M1 13H10M9.5 1L5.5 13" fill="none" stroke="#4f5357" stroke-width="2"/></svg>
<svg class="a" style="left:626px;top:148px" width="14" height="16" viewBox="0 0 14 16"><path d="M2.5 0.5V7A4.5 4.5 0 0 0 11.5 7V0.5" fill="none" stroke="#4f5357" stroke-width="2"/><path d="M1.5 15H12.5" stroke="#4f5357" stroke-width="2"/></svg>
<svg class="a" style="left:655px;top:146.5px" width="13" height="13" viewBox="0 0 16 15"><path d="M2 14L7 1.5H9L14 14M4.3 9.5H11.7" fill="none" stroke="#4f5357" stroke-width="2"/></svg>
<div class="a" style="left:651px;top:163px;width:22px;height:4px;background:#000"></div>
<svg class="a" style="left:685px;top:146px" width="16" height="14" viewBox="0 0 18 16"><path d="M1 15.5L4 11.5L7 14L5 15.5z" fill="#4f5357"/><path d="M5 10L13 1.5L17.5 5.5L9 14z" fill="#4f5357"/></svg>
<div class="a tsep" style="left:712px"></div>
<svg class="a" style="left:721px;top:151px" width="18" height="9" viewBox="0 0 20 10"><path d="M8 1H5A4 4 0 0 0 5 9H8M12 1H15A4 4 0 0 1 15 9H12M6 5H14" fill="none" stroke="#4f5357" stroke-width="2"/></svg>
<svg class="a" style="left:751px;top:147.5px" width="15" height="15" viewBox="0 0 18 18"><path d="M2 1H16A1 1 0 0 1 17 2V13A1 1 0 0 1 16 14H5L1 17.5V2A1 1 0 0 1 2 1z" fill="none" stroke="#4f5357" stroke-width="1.7"/><path d="M9 4V11M5.5 7.5H12.5" stroke="#4f5357" stroke-width="1.7"/></svg>
<svg class="a" style="left:778px;top:148px" width="14" height="14" viewBox="0 0 16 16"><rect x="1" y="1" width="14" height="14" rx="1" fill="none" stroke="#4f5357" stroke-width="1.8"/><path d="M4 12L6.5 8.5L8.5 11L10 9.5L12 12z" fill="#4f5357"/></svg>
<svg class="a" style="left:797px;top:152px" width="10" height="5" viewBox="-1 -0.5 12 6"><path d="M0 0H10L5 5z" fill="#4f5357"/></svg>
<div class="a tsep" style="left:815px"></div>
<svg class="a" style="left:828px;top:148px" width="14" height="14" viewBox="0 0 16 16"><path d="M0 2H16M0 6H10M0 10H16M0 14H10" stroke="#4f5357" stroke-width="1.8"/></svg>
<svg class="a" style="left:845px;top:152px" width="10" height="5" viewBox="-1 -0.5 12 6"><path d="M0 0H10L5 5z" fill="#4f5357"/></svg>
<div class="a tsep" style="left:863px"></div>
<svg class="a" style="left:875px;top:147px" width="18" height="16" viewBox="0 0 20 18"><path d="M8 2H20M8 9H20M8 16H20" stroke="#4f5357" stroke-width="2"/><path d="M3.5 1L0.5 5H6.5zM3.5 17L0.5 13H6.5zM3.5 4V14" fill="#4f5357" stroke="#4f5357" stroke-width="1.6"/></svg>
<div class="a tsep" style="left:902px"></div>
<svg class="a" style="left:914px;top:148px" width="15" height="14" viewBox="0 0 18 18" preserveAspectRatio="none"><path d="M7 3H18M7 9H18M7 15H18" stroke="#4f5357" stroke-width="2"/><text x="0" y="6" font-size="6" fill="#4f5357" font-family="Liberation Sans">1</text><text x="0" y="12" font-size="6" fill="#4f5357" font-family="Liberation Sans">2</text><text x="0" y="18" font-size="6" fill="#4f5357" font-family="Liberation Sans">3</text></svg>
<svg class="a" style="left:939px;top:152px" width="10" height="5" viewBox="-1 -0.5 12 6"><path d="M0 0H10L5 5z" fill="#4f5357"/></svg>
<svg class="a" style="left:961px;top:148.5px" width="15" height="13" viewBox="0 0 18 18" preserveAspectRatio="none"><circle cx="2" cy="3" r="1.8" fill="#4f5357"/><circle cx="2" cy="9" r="1.8" fill="#4f5357"/><circle cx="2" cy="15" r="1.8" fill="#4f5357"/><path d="M6 3H18M6 9H18M6 15H18" stroke="#4f5357" stroke-width="2"/></svg>
<svg class="a" style="left:985px;top:152px" width="10" height="5" viewBox="-1 -0.5 12 6"><path d="M0 0H10L5 5z" fill="#4f5357"/></svg>
<svg class="a" style="left:1006px;top:147.5px" width="14" height="15" viewBox="0 0 17 18" preserveAspectRatio="none"><path d="M0 1H17M7 6H17M7 11H17M0 16H17" stroke="#4f5357" stroke-width="2"/><path d="M4.5 5.5V11.5L0.5 8.5z" fill="#4f5357"/></svg>
<svg class="a" style="left:1034px;top:147.5px" width="14" height="15" viewBox="0 0 17 18" preserveAspectRatio="none"><path d="M0 1H17M7 6H17M7 11H17M0 16H17" stroke="#4f5357" stroke-width="2"/><path d="M0.5 5.5V11.5L4.5 8.5z" fill="#4f5357"/></svg>
<div class="a tsep" style="left:1060px"></div>
<svg class="a" style="left:1071px;top:148px" width="15" height="14" viewBox="0 0 18 18"><path d="M2 1.5H16M9 1.5L5.5 15M1.5 4L15 17" stroke="#4f5357" stroke-width="2"/></svg>
<div class="a tsep" style="left:1097px"></div>
<svg class="a" style="left:1108px;top:153px" width="14" height="4" viewBox="0 0 16 4"><circle cx="2" cy="2" r="1.8" fill="#4f5357"/><circle cx="8" cy="2" r="1.8" fill="#4f5357"/><circle cx="14" cy="2" r="1.8" fill="#4f5357"/></svg>
<div class="a" style="left:1225px;top:142px;width:43px;height:26px;border-radius:4px;background:#e8f0fe"></div>
<svg class="a" style="left:1231px;top:147px" width="16" height="16" viewBox="0 0 16 16"><path d="M0.5 15.5L1.5 11L11.5 1A2 2 0 0 1 14.5 1L15 1.5A2 2 0 0 1 15 4.5L5 14.5z" fill="#1b5ad0"/><path d="M2.8 13.2L3.3 11.6L12 2.9L13.1 4L4.4 12.7z" fill="#bfe0fb"/></svg>
<svg class="a" style="left:1254px;top:152px" width="10" height="5" viewBox="-1 -0.5 12 6"><path d="M0 0H10L5 5z" fill="#1a5fcf"/></svg>
<div class="a tsep" style="left:1274px"></div>
<svg class="a" style="left:1286px;top:151px" width="12" height="8" viewBox="0 0 12 8"><path d="M1 7L6 2L11 7" fill="none" stroke="#4f5357" stroke-width="2"/></svg>


<div class="a" style="left:1310px;top:135px;width:56px;height:1px;background:#dadce0"></div>
</body></html>
